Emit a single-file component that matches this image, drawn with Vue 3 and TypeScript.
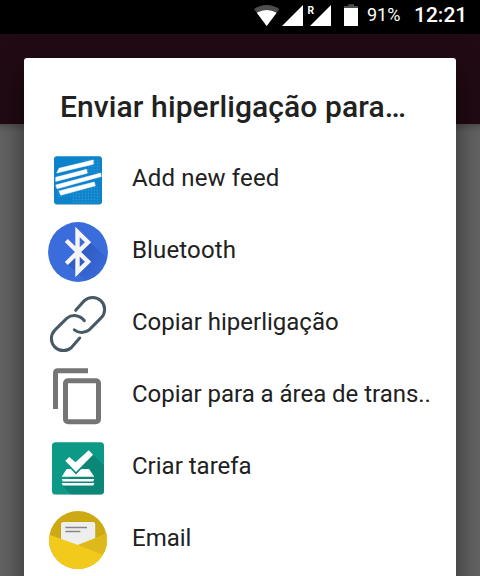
<script setup lang="ts">
type IconName = 'feed' | 'bluetooth' | 'link' | 'copy' | 'task' | 'email'

interface ShareTarget {
  icon: IconName
  label: string
}

const targets: ShareTarget[] = [
  { icon: 'feed', label: 'Add new feed' },
  { icon: 'bluetooth', label: 'Bluetooth' },
  { icon: 'link', label: 'Copiar hiperligação' },
  { icon: 'copy', label: 'Copiar para a área de trans..' },
  { icon: 'task', label: 'Criar tarefa' },
  { icon: 'email', label: 'Email' },
]
</script>

<template>
  <div class="screen">
    <header class="status">
      <svg class="signals" viewBox="250 0 112 34" aria-hidden="true">
        <path d="M254 9Q266.7 .8 279.4 9L266.7 26Z" fill="#4d4d4d" />
        <path d="M256.8 12.8Q266.7 7.2 276.6 12.8L266.7 26Z" fill="#fff" />
        <path d="M282 26H303V5Z M310 26H331V5Z" fill="#fff" />
        <text x="307.4" y="14.4" class="roaming" textLength="6.6" lengthAdjust="spacingAndGlyphs">R</text>
        <path d="M348.2 4.2H354V6H358V9H344V6H348.2Z" fill="#4d4d4d" />
        <path d="M344 8H358V26H344Z" fill="#fff" />
      </svg>
      <span class="percent">91%</span>
      <span class="clock">12:21</span>
    </header>
    <main class="backdrop">
      <section class="dialog">
        <h1 class="title">Enviar hiperligação para…</h1>
        <ul class="list">
          <li v-for="target in targets" :key="target.icon" class="row">
            <svg class="icon" viewBox="0 0 60 60" aria-hidden="true">
              <template v-if="target.icon === 'feed'">
                <defs>
                  <pattern id="dots" width="3" height="3" patternUnits="userSpaceOnUse">
                    <rect x=".7" y=".7" width="1.5" height="1.5" fill="#47a5dd" opacity=".6" />
                  </pattern>
                </defs>
                <rect x="6" y="7" width="48" height="48" rx="3" fill="#c9ced1" />
                <rect x="6" y="6.3" width="48" height="48" rx="3" fill="#0c82cb" />
                <path d="M34 8H52V23H38Z M9 37L48 34L52 42V53H24V46L9 47Z" fill="url(#dots)" />
                <path d="M8.7 23L11 18.3L45.3 10V14.2Z M7.7 27.3L38.7 19.3L39.3 23.2L7.7 31.4Z M7.7 35L52.7 23L53.3 26.5L9 38.8Z M11 41L46.3 32L47.3 35.8L12.7 45.2Z" class="stripes" />
              </template>
              <template v-else-if="target.icon === 'bluetooth'">
                <defs>
                  <linearGradient id="btShade" x1="0" y1="0" x2="1" y2="1">
                    <stop offset="0" stop-color="#2750ad" />
                    <stop offset=".8" stop-color="#3767d5" />
                  </linearGradient>
                </defs>
                <circle cx="30" cy="30" r="29.9" fill="#3b6cdb" />
                <path d="M42 20L58.5 36Q54 53 38 58.8L29 51L19 42L29 30Z" fill="url(#btShade)" opacity=".8" />
                <path d="M18.3 18.5L40 39.8L29.5 50V10L40 20.2L18.3 41.5" class="bt" />
              </template>
              <path
                v-else-if="target.icon === 'link'"
                class="chain"
                d="M27.7 16.3L36.1 6.9A12 12 0 0 1 53.1 23.9L41 36A12 12 0 0 1 26.3 35.8M31.7 44L23.9 53.1A12 12 0 0 1 6.9 36.1L18.7 24.4A12 12 0 0 1 36.3 26.7"
              />
              <template v-else-if="target.icon === 'copy'">
                <path d="M5 43V7.3Q5 2.3 10 2.3H40V7.3H10V43Z" fill="#757575" />
                <rect x="17.5" y="14.7" width="33" height="41" rx="2.5" class="sheet" />
              </template>
              <template v-else-if="target.icon === 'task'">
                <rect x="4" y="5" width="52" height="52" rx="3.5" fill="#b5c7c4" />
                <rect x="4" y="4.2" width="52" height="52" rx="3.5" fill="#0c9a87" />
                <path d="M45 16.7L56 27.5V52.5Q56 56.2 52 56.2H23L14 47.3L28 34Z" fill="#0b8778" />
                <path d="M17.3 22.7L21.3 19L27.5 24.3L40.7 12.3L45 16.7L28 34Z" fill="#fff" />
                <path d="M13.7 38.7L18.7 31H22.7L28 36.4L33.3 31H41L46.3 38.7Z M13.7 41H46.3L45.3 43.4H14.7Z M13.7 45H46.3L45.3 47.4H14.7Z" fill="#fff" />
              </template>
              <template v-else>
                <defs>
                  <clipPath id="mailDisc"><circle cx="30" cy="30" r="29" /></clipPath>
                </defs>
                <g clip-path="url(#mailDisc)">
                  <rect width="60" height="60" fill="#cdaa13" />
                  <rect x="12.3" y="11.4" width="35.8" height="26" rx="2.5" fill="#b39717" opacity=".45" />
                  <path d="M13 37V14Q13 12 15 12H45.3Q47.3 12 47.3 14V37Z" fill="#eee" />
                  <path d="M17.3 17.5H39M17.3 21.5H32.3" stroke="#868686" stroke-width="1.5" />
                  <path d="M0 24.2L30 35L60 23V60H0Z" fill="#f1ca1c" />
                  <path d="M30 35L60 23V47Z" fill="#deb91b" />
                </g>
              </template>
            </svg>
            <span class="label" :class="`label-${target.icon}`">{{ target.label }}</span>
          </li>
        </ul>
      </section>
    </main>
  </div>
</template>

<style>
body {
  margin: 0;
  background: #000;
}
</style>

<style scoped>
.screen {
  display: flex;
  flex-direction: column;
  width: 480px;
  height: 576px;
  overflow: hidden;
  font-family: Roboto, "Liberation Sans", sans-serif;
}
.status {
  display: flex;
  flex: none;
  align-items: center;
  height: 34px;
  padding-left: 250px;
  background: #000;
  color: #fff;
  line-height: 30px;
  white-space: nowrap;
}
.signals {
  flex: none;
  width: 112px;
  height: 34px;
}
.roaming {
  fill: #fff;
  font-size: 11.5px;
  font-weight: 700;
}
.percent {
  width: 48px;
  padding: 0 0 4px 5px;
  box-sizing: border-box;
  font-size: 18px;
}
.clock {
  padding: 0 0 4px 4px;
  font-size: 21px;
  font-weight: 500;
}
.backdrop {
  flex: 1;
  min-height: 0;
  padding: 24px 24px 0;
  background: linear-gradient(#210a14 0 90px, #505050 90px, #646464 98px);
}
.dialog {
  height: 560px;
  border-radius: 3px;
  background: #fff;
  box-shadow: 0 14px 30px rgba(0, 0, 0, 0.55);
  color: #212121;
}
.title {
  margin: 0;
  padding: 29px 36px 17px;
  font-size: 30px;
  font-weight: 500;
  line-height: 40px;
  letter-spacing: 0.1px;
  white-space: nowrap;
}
.list {
  margin: 0;
  padding: 0;
  list-style: none;
}
.row {
  display: flex;
  align-items: center;
  gap: 24px;
  height: 72px;
  padding-left: 24px;
}
.icon {
  flex: none;
  width: 60px;
  height: 60px;
}
.label {
  padding-bottom: 4px;
  font-size: 24px;
  line-height: 32px;
  white-space: nowrap;
}
.label-feed,
.label-bluetooth {
  letter-spacing: 0.15px;
}
.label-copy {
  letter-spacing: -0.03px;
}
.stripes {
  fill: #fff;
  stroke: #fff;
  stroke-width: 0.5;
}
.bt {
  fill: none;
  stroke: #f5f5f5;
  stroke-width: 4.4;
}
.chain {
  fill: none;
  stroke: #455a64;
  stroke-width: 3;
  stroke-linecap: round;
}
.sheet {
  fill: none;
  stroke: #757575;
  stroke-width: 5;
}
</style>
